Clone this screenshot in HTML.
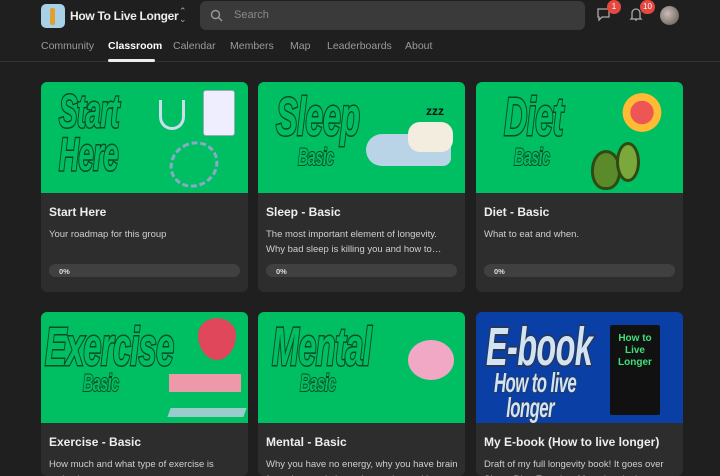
<!DOCTYPE html>
<html><head><style>
*{margin:0;padding:0;box-sizing:border-box}
html,body{width:720px;height:476px;overflow:hidden}
body{background:#1f1f1f;font-family:"Liberation Sans",sans-serif;color:#e6e6e6;position:relative}
.top{position:absolute;left:0;top:0;width:720px;height:62px;border-bottom:1px solid #333}
.logo{position:absolute;left:41px;top:4px;width:24px;height:24px;border-radius:5px;background:#a8d0e6}
.logo:after{content:"";position:absolute;left:9px;top:4px;width:5px;height:17px;background:#e0a030;border-radius:2px}
.gname{position:absolute;left:70px;top:9px;font-size:12px;font-weight:bold;color:#eee;letter-spacing:-0.3px}
.chev{position:absolute;left:178px;top:7px;color:#aaa;font-size:9px;line-height:8px}
.search{position:absolute;left:200px;top:1px;width:385px;height:29px;background:#3a3a3a;border-radius:6px}
.search span{position:absolute;left:34px;top:8px;font-size:11px;color:#8a8a8a}
.nav{position:absolute;top:40px;font-size:10.5px;color:#9a9a9a}
.nav.act{color:#fff;font-weight:bold}
.uline{position:absolute;left:108px;top:59px;width:47px;height:3px;background:#eee;border-radius:2px}
.badge{position:absolute;background:#e5483f;color:#fff;font-size:8px;border-radius:8px;height:14px;min-width:14px;text-align:center;line-height:14px;padding:0 3px}
.avatar{position:absolute;left:660px;top:6px;width:19px;height:19px;border-radius:50%;background:radial-gradient(circle at 40% 40%,#cbb,#554)}
.card{position:absolute;width:207px;height:210px;background:#2d2d2d;border-radius:6px;overflow:hidden}
.r2{height:164px}
.img{height:111px;background:#00bf63;position:relative;overflow:hidden}
.img.blue{background:#0a3fa5}
.big{position:absolute;font-weight:bold;font-style:italic;color:#00bf63;-webkit-text-stroke:3px #0a4a26;paint-order:stroke fill;letter-spacing:-1px;transform:scaleX(0.6);transform-origin:left top;white-space:nowrap}
.t{position:absolute;left:8px;top:123px;font-size:12px;font-weight:bold;color:#eee}
.d{position:absolute;left:8px;top:145px;width:192px;font-size:9.5px;line-height:15px;color:#cfcfcf;max-height:30px;overflow:hidden}
.r2 .d{max-height:19px}
.bar{position:absolute;left:8px;top:182px;width:191px;height:13px;background:#404040;border-radius:7px;font-size:7.5px;font-weight:bold;color:#ddd;padding:3px 10px}
</style></head><body>
<div class="top">
<div class="logo"></div>
<div class="gname">How To Live Longer</div>
<div class="chev" style="left:179px">⌃<br>⌄</div>
<div class="search"><svg style="position:absolute;left:10px;top:8px" width="13" height="13" viewBox="0 0 13 13"><circle cx="5.5" cy="5.5" r="4" stroke="#999" stroke-width="1.4" fill="none"/><path d="M8.5 8.5L12 12" stroke="#999" stroke-width="1.4"/></svg><span>Search</span></div>
<svg style="position:absolute;left:596px;top:8px" width="15" height="14" viewBox="0 0 15 14"><path d="M2 1h11v8H6l-3 3V9H2z" stroke="#aaa" stroke-width="1.3" fill="none"/></svg>
<div class="badge" style="left:607px;top:0">1</div>
<svg style="position:absolute;left:629px;top:7px" width="14" height="15" viewBox="0 0 14 15"><path d="M3 11V6a4 4 0 018 0v5l1 1H2zM6 13h2" stroke="#aaa" stroke-width="1.3" fill="none"/></svg>
<div class="badge" style="left:640px;top:0">10</div>
<div class="avatar"></div>
<div class="nav" style="left:41px">Community</div>
<div class="nav act" style="left:108px">Classroom</div>
<div class="nav" style="left:173px">Calendar</div>
<div class="nav" style="left:230px">Members</div>
<div class="nav" style="left:290px">Map</div>
<div class="nav" style="left:327px">Leaderboards</div>
<div class="nav" style="left:405px">About</div>
<div class="uline"></div>
</div>

<div class="card" style="left:41px;top:82px"><div class="img">
<div class="big" style="left:18px;top:8px;font-size:46px;line-height:43px">Start<br>Here</div>
<div style="position:absolute;left:162px;top:8px;width:32px;height:46px;background:#eef;border-radius:3px;border:1px solid #9ab"></div>
<div style="position:absolute;left:118px;top:18px;width:26px;height:30px;border:3px solid #cde;border-top:none;border-radius:0 0 14px 14px"></div>
<div style="position:absolute;left:128px;top:60px;width:50px;height:45px;border:3px dashed #8aa8c8;border-radius:50%;transform:rotate(-30deg)"></div>
</div>
<div class="t">Start Here</div><div class="d">Your roadmap for this group</div><div class="bar">0%</div></div>

<div class="card" style="left:258px;top:82px"><div class="img">
<div class="big" style="left:18px;top:4px;font-size:54px">Sleep</div>
<div class="big" style="left:40px;top:62px;font-size:24px;-webkit-text-stroke:2px #0a4a26">Basic</div>
<div style="position:absolute;left:108px;top:52px;width:85px;height:32px;background:#b9d4e6;border-radius:16px 12px 8px 16px"></div>
<div style="position:absolute;left:150px;top:40px;width:45px;height:30px;background:#f3ede0;border-radius:12px"></div>
<div style="position:absolute;left:168px;top:22px;font-weight:bold;font-size:12px;color:#111">zzz</div>
</div>
<div class="t">Sleep - Basic</div><div class="d">The most important element of longevity. Why bad sleep is killing you and how to…</div><div class="bar">0%</div></div>

<div class="card" style="left:476px;top:82px"><div class="img">
<div class="big" style="left:28px;top:4px;font-size:54px">Diet</div>
<div class="big" style="left:38px;top:62px;font-size:24px;-webkit-text-stroke:2px #0a4a26">Basic</div>
<div style="position:absolute;left:135px;top:8px;width:62px;height:45px;background:radial-gradient(circle,#e55 0 30%,#fb3 31% 50%,transparent 51%)"></div>
<div style="position:absolute;left:115px;top:68px;width:30px;height:40px;background:#5a8a2a;border-radius:50% 50% 45% 45%;border:3px solid #2f4a12"></div>
<div style="position:absolute;left:140px;top:60px;width:24px;height:40px;background:#7aa83a;border-radius:50%;border:3px solid #2f4a12"></div>
</div>
<div class="t">Diet - Basic</div><div class="d">What to eat and when.</div><div class="bar">0%</div></div>

<div class="card r2" style="left:41px;top:312px"><div class="img">
<div class="big" style="left:4px;top:4px;font-size:54px">Exercise</div>
<div class="big" style="left:42px;top:58px;font-size:24px;-webkit-text-stroke:2px #0a4a26">Basic</div>
<div style="position:absolute;left:157px;top:6px;width:38px;height:42px;background:#e0475a;border-radius:50% 50% 50% 50%/40% 40% 60% 60%"></div>
<div style="position:absolute;left:128px;top:62px;width:72px;height:18px;background:#e9a"></div>
<div style="position:absolute;left:128px;top:96px;width:76px;height:9px;background:#9cc;transform:skewX(-20deg)"></div>
</div>
<div class="t">Exercise - Basic</div><div class="d">How much and what type of exercise is optimal</div></div>

<div class="card r2" style="left:258px;top:312px"><div class="img">
<div class="big" style="left:14px;top:4px;font-size:54px">Mental</div>
<div class="big" style="left:42px;top:58px;font-size:24px;-webkit-text-stroke:2px #0a4a26">Basic</div>
<div style="position:absolute;left:150px;top:28px;width:46px;height:40px;background:#f1a8c4;border-radius:50%"></div>
</div>
<div class="t">Mental - Basic</div><div class="d">Why you have no energy, why you have brain fog, why people have depression and how t…</div></div>

<div class="card r2" style="left:476px;top:312px"><div class="img blue">
<div class="big" style="left:10px;top:4px;font-size:54px;color:#cfe4f5;-webkit-text-stroke:3px #334">E-book</div>
<div class="big" style="left:18px;top:58px;font-size:28px;line-height:25px;color:#cfe4f5;-webkit-text-stroke:1.5px #334">How to live<br>&nbsp;&nbsp;&nbsp;longer</div>
<div style="position:absolute;left:134px;top:13px;width:50px;height:90px;background:#111;border-radius:2px;color:#3ee07a;font-size:10px;font-weight:bold;text-align:center;padding-top:8px;line-height:12px">How to<br>Live Longer</div>
</div>
<div class="t">My E-book (How to live longer)</div><div class="d">Draft of my full longevity book! It goes over Sleep, Diet, Exercise, Mental and other healt…</div></div>
</body></html>
